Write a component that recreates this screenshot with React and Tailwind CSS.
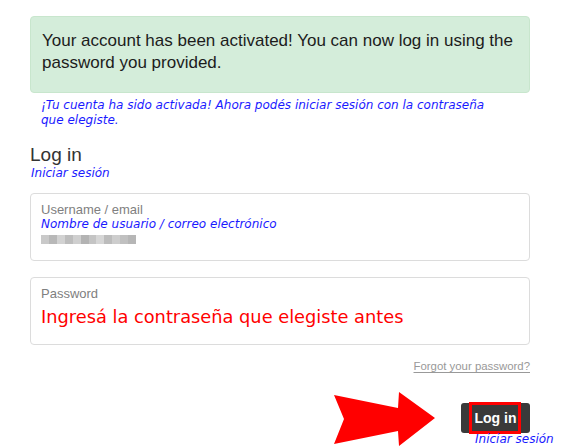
import React from 'react';

const blurShades = ['#c9c9c9', '#b8b8b8', '#d2d2d2', '#bdbdbd', '#cfcfcf', '#b3b3b3', '#c4c4c4', '#d6d6d6', '#bcbcbc', '#cdcdcd', '#c0c0c0', '#b6b6b6'];

function RedArrow() {
  return (
    <svg width="104" height="56" viewBox="0 0 104 56" className="absolute left-[303px] top-[-12px]">
      <defs>
        <filter id="soft" x="-5%" y="-5%" width="110%" height="110%">
          <feGaussianBlur stdDeviation="0.7" />
        </filter>
      </defs>
      <polygon
        points="1,4 65,17 66,1 102,27 66,55 65,40 1,53 11,28"
        fill="#ff0000"
        filter="url(#soft)"
      />
    </svg>
  );
}

function App() {
  return (
    <div className="relative w-[563px] h-[447px] overflow-hidden bg-white font-['Liberation_Sans',Arial,sans-serif]">
      <div className="ml-[30px] w-[500px] pt-[16px]">
        {/* activation notice */}
        <div className="h-[77px] rounded-[4px] border border-[#c8e6cd] bg-[#d4edda] px-[11px] pt-[13px] text-[17px] leading-[22px] text-[#1c1c1c]">
          Your account has been activated! You can now log in using the password you provided.
        </div>
        <p className="ml-[11px] mt-[5px] w-[465px] font-['DejaVu_Sans',sans-serif] text-[12px] italic leading-[15px] text-[#1a1aff]">
          ¡Tu cuenta ha sido activada! Ahora podés iniciar sesión con la contraseña que elegiste.
        </p>

        <h2 className="mt-[16px] text-[19px] leading-[22px] text-[#333]">Log in</h2>
        <p className="ml-[1px] font-['DejaVu_Sans',sans-serif] text-[12px] italic leading-[14px] text-[#1a1aff]">
          Iniciar sesión
        </p>

        {/* username */}
        <div className="mt-[13px] h-[68px] rounded-[4px] border border-[#dcdcdc] px-[10px] pt-[9px]">
          <div className="text-[13px] leading-[14px] text-[#808080]">Username / email</div>
          <div className="mt-[1px] font-['DejaVu_Sans',sans-serif] text-[12px] italic leading-[12px] text-[#1a1aff]">
            Nombre de usuario / correo electrónico
          </div>
          <div className="mt-[5px] flex h-[9px] w-[95px]">
            {blurShades.map((c, i) => (
              <span key={i} className="h-full flex-1" style={{ backgroundColor: c }} />
            ))}
          </div>
        </div>

        {/* password */}
        <div className="mt-[16px] h-[68px] rounded-[4px] border border-[#dcdcdc] px-[10px] pt-[9px]">
          <div className="text-[13px] leading-[14px] text-[#808080]">Password</div>
          <div className="mt-[5px] font-['DejaVu_Sans',sans-serif] text-[17.8px] leading-[22px] text-[#ff0000]">
            Ingresá la contraseña que elegiste antes
          </div>
        </div>

        <div className="mt-[14px] flex justify-end">
          <a href="#" className="text-[11.4px] leading-[14px] text-[#999] underline underline-offset-2">
            Forgot your password?
          </a>
        </div>

        {/* submit row */}
        <div className="relative mt-[30px] flex justify-end">
          <RedArrow />
          <button className="relative h-[30px] w-[69px] rounded-[3px] bg-[#3a3a3a] text-[14px] font-bold text-white">
            Log in
            <span className="absolute left-[8px] top-[-1px] h-[32px] w-[52px] border-[3px] border-[#ff0000]" />
          </button>
          <span className="absolute left-[445px] top-[29px] whitespace-nowrap font-['DejaVu_Sans',sans-serif] text-[12px] italic leading-[14px] text-[#1a1aff]">
            Iniciar sesión
          </span>
        </div>
      </div>
    </div>
  );
}

export default App;
